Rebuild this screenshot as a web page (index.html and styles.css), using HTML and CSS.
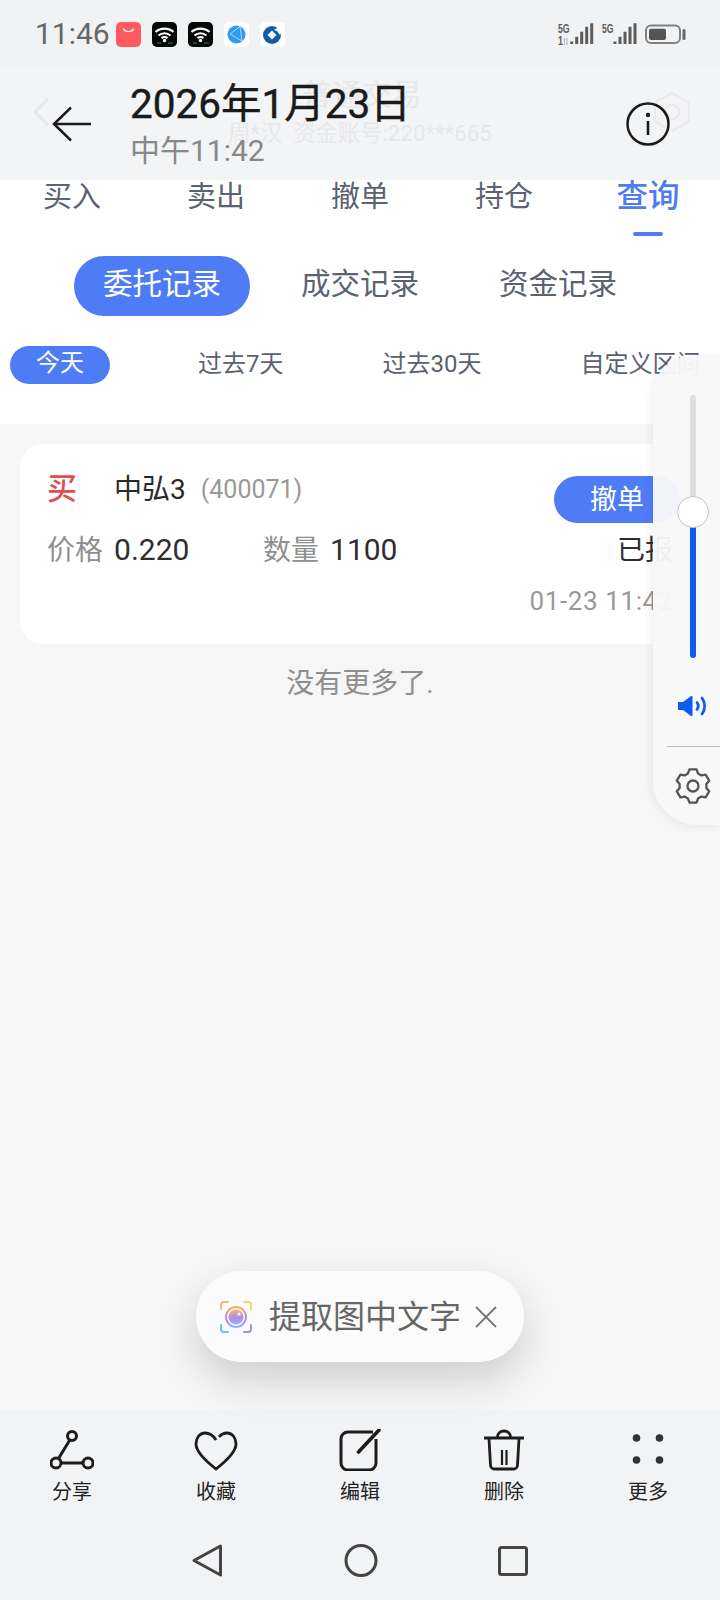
FILE: index.html
```html
<!DOCTYPE html>
<html lang="zh-CN">
<head>
<meta charset="utf-8">
<title>委托记录</title>
<link rel="stylesheet" href="styles.css">
</head>
<body>
<div class="app">
  <div class="status">
    <span class="time">11:46</span>
    <div class="status-apps">
      <svg class="app-icon" viewBox="0 0 25 25"><rect width="25" height="25" rx="5" fill="#ff5a60"/><path d="M7.500 6.500c1 4 9 4 10 0" fill="none" stroke="#fff" stroke-width="1.200"/></svg>
      <svg class="app-icon" viewBox="0 0 25 25"><rect width="25" height="25" rx="5" fill="#050707"/><path d="M3.500 10c5-4.500 13-4.500 18 0M6.500 13.500c3.500-3 8.500-3 12 0M9.500 16c1.800-1.200 4.200-1.200 6 0" fill="none" stroke="#fff" stroke-width="2.200"/><circle cx="12.500" cy="18.500" r="1.700" fill="#fff"/><path d="M5 21h4M16 21h5" stroke="#1f7f83" stroke-width="1.200"/></svg>
      <svg class="app-icon" viewBox="0 0 25 25"><rect width="25" height="25" rx="5" fill="#050707"/><path d="M3.500 10c5-4.500 13-4.500 18 0M6.500 13.500c3.500-3 8.500-3 12 0M9.500 16c1.800-1.200 4.200-1.200 6 0" fill="none" stroke="#fff" stroke-width="2.200"/><circle cx="12.500" cy="18.500" r="1.700" fill="#fff"/><path d="M5 21h4M16 21h5" stroke="#1f7f83" stroke-width="1.200"/></svg>
      <svg class="app-icon" viewBox="0 0 25 25"><rect width="25" height="25" rx="5" fill="#fff"/><circle cx="12.500" cy="12.500" r="9" fill="#2c9cf2"/><path d="M16 4.500 6 12l12 7M16 4.500 18 19" fill="none" stroke="#cfeaff" stroke-width=".8"/></svg>
      <svg class="app-icon" viewBox="0 0 25 25"><rect width="25" height="25" rx="5" fill="#fff"/><circle cx="12" cy="13" r="9" fill="#0f5da8"/><path d="M12 8.500l4.500 4.500-4.500 4.500-4.500-4.500z" fill="#fff"/><path d="M14 8 20 4l3 4-3 5-3-4z" fill="#fff"/></svg>
    </div>
    <svg class="signal" viewBox="0 0 132 28">
      <text class="sig-label" x="2" y="13" textLength="11.500" lengthAdjust="spacingAndGlyphs">5G</text>
      <text class="sig-label" x="2" y="25" textLength="5" lengthAdjust="spacingAndGlyphs">1</text>
      <path d="M8.500 18v7M11 25v-7" stroke="#bbb" stroke-width="1.200"/>
      <path class="bars" d="M15.700 21.500V24M20.700 16.700V24M25.700 11.700V24M30.700 6.700V24M35.700 3.300V24"/>
      <text class="sig-label" x="46" y="13" textLength="11.500" lengthAdjust="spacingAndGlyphs">5G</text>
      <path class="bars" d="M59 21.500V24M64 16.700V24M69 11.700V24M74 6.700V24M79 3.300V24"/>
      <rect x="90" y="5.500" width="34" height="17.500" rx="5" fill="none" stroke="#808080" stroke-width="2"/>
      <rect x="93" y="8.700" width="17" height="11.300" rx="2" fill="#555"/>
      <rect x="126.500" y="9" width="3" height="11" rx="1.500" fill="#666"/>
    </svg>
  </div>

  <header class="header">
    <div class="ghost">
      <svg class="ghost-back" viewBox="0 0 18 32"><path d="M16 2 2 16l14 14" fill="none" stroke="#e7e8ea" stroke-width="3"/></svg>
      <div class="ghost-title">普通交易</div>
      <div class="ghost-sub">周*汉&nbsp;&nbsp;资金账号:220***665</div>
      <svg class="ghost-hex" viewBox="0 0 38 40"><path d="M19 1 36 10.500v19L19 39 2 29.500v-19z" fill="none" stroke="#e9eaec" stroke-width="2"/><circle cx="19" cy="20" r="7" fill="none" stroke="#efe6e8" stroke-width="2"/></svg>
    </div>
    <svg class="back-arrow" viewBox="0 0 40 36"><path d="M19 1.500 2 18l17 16.500M2 18h37" fill="none" stroke="#1c1c1c" stroke-width="2.500"/></svg>
    <div class="heading">
      <div class="title">2026年1月23日</div>
      <div class="subtitle">中午11:42</div>
    </div>
    <svg class="info" viewBox="0 0 44 44"><circle cx="22" cy="22" r="20.500" fill="none" stroke="#1c1c1c" stroke-width="2.500"/><circle cx="22" cy="13" r="2.200" fill="#1c1c1c"/><path d="M22 19v14" stroke="#1c1c1c" stroke-width="2.600"/></svg>
  </header>

  <main class="main">
    <section class="top">
      <nav class="tabs">
        <div class="tab">买入</div>
        <div class="tab">卖出</div>
        <div class="tab">撤单</div>
        <div class="tab">持仓</div>
        <div class="tab tab-active">查询<span class="tab-bar"></span></div>
      </nav>
      <div class="records">
        <div class="record record-active">委托记录</div>
        <div class="record">成交记录</div>
        <div class="record">资金记录</div>
      </div>
      <div class="ranges">
        <div class="range range-active">今天</div>
        <div class="range range-7">过去7天</div>
        <div class="range range-30">过去30天</div>
        <div class="range range-custom">自定义区间</div>
      </div>
    </section>

    <article class="card">
      <div class="card-head">
        <span class="side">买</span>
        <span class="name">中弘3</span>
        <span class="code">(400071)</span>
        <button class="cancel">撤单</button>
      </div>
      <div class="card-row">
        <span class="label">价格</span><span class="value value-price">0.220</span>
        <span class="label">数量</span><span class="value">1100</span>
        <span class="state">已报</span>
      </div>
      <div class="stamp">01-23 11:42</div>
    </article>
    <p class="no-more">没有更多了.</p>
  </main>

  <footer class="footer">
    <div class="tools">
      <div class="tool">
        <svg class="tool-icon" viewBox="0 0 44 42"><g fill="none" stroke="#1c1c1c" stroke-width="3"><circle cx="22" cy="7" r="4.500"/><circle cx="6" cy="34" r="5"/><circle cx="38" cy="34" r="5"/><path d="M19.500 11.500 8.500 29.500M11 34h22"/></g></svg>
        <span class="tool-label">分享</span>
      </div>
      <div class="tool">
        <svg class="tool-icon" viewBox="0 0 44 42"><path d="M22 11C19 6 15 4 11 4 5.500 4 2 9 2 15c0 8 11 18 20 25 9-7 20-17 20-25 0-6-3.500-11-9-11-3 0-6 1.500-8 4" fill="none" stroke="#1c1c1c" stroke-width="2.800"/></svg>
        <span class="tool-label">收藏</span>
      </div>
      <div class="tool">
        <svg class="tool-icon" viewBox="0 0 44 42"><path d="M35 3H10a7 7 0 0 0-7 7v24a7 7 0 0 0 7 7h21a7 7 0 0 0 7-7V10" fill="none" stroke="#1c1c1c" stroke-width="3"/><path d="M20.500 23 41 1" stroke="#1c1c1c" stroke-width="3.600" stroke-linecap="round"/></svg>
        <span class="tool-label">编辑</span>
      </div>
      <div class="tool">
        <svg class="tool-icon" viewBox="0 0 44 42"><g fill="none" stroke="#1c1c1c" stroke-width="2.800"><path d="M2 9h40"/><path d="M15.500 8c0-8 13-8 13 0"/><path d="M7 10l1.500 26a4 4 0 0 0 4 4h19a4 4 0 0 0 4-4L37 10"/><path d="M20 21v15M24.500 21v15" stroke-width="2.200"/></g></svg>
        <span class="tool-label">删除</span>
      </div>
      <div class="tool">
        <svg class="tool-icon" viewBox="0 0 44 42"><g fill="#333"><circle cx="10.500" cy="9" r="3.800"/><circle cx="33.500" cy="9" r="3.800"/><circle cx="10.500" cy="31" r="3.800"/><circle cx="33.500" cy="31" r="3.800"/></g></svg>
        <span class="tool-label">更多</span>
      </div>
    </div>
    <div class="nav">
      <svg class="nav-back" viewBox="0 0 30 33"><path d="M28.500 2 2 16.500 28.500 31z" fill="none" stroke="#444" stroke-width="3" stroke-linejoin="round"/></svg>
      <svg class="nav-home" viewBox="0 0 34 33"><circle cx="17" cy="16.500" r="15" fill="none" stroke="#444" stroke-width="3"/></svg>
      <svg class="nav-recent" viewBox="0 0 30 30"><rect x="1.500" y="1.500" width="27" height="27" rx="2" fill="none" stroke="#444" stroke-width="3"/></svg>
    </div>
  </footer>

  <aside class="volume">
    <div class="track">
      <span class="track-off"></span>
      <span class="track-on"></span>
      <span class="thumb"></span>
    </div>
    <svg class="speaker" viewBox="0 0 32 22"><path d="M1 7h5l8-6a1 1 0 0 1 1.500 1v18a1 1 0 0 1-1.500 1l-8-6H1z" fill="#0f5af0"/><path d="M20 7.500c1.500 2 1.500 5 0 7M25 3c3.500 4.500 3.500 11.500 0 16" fill="none" stroke="#0f5af0" stroke-width="2.800" stroke-linecap="round"/></svg>
    <div class="vol-divider"></div>
    <svg class="gear" viewBox="0 0 36 36"><g transform="translate(18 18)" fill="none" stroke="#555" stroke-width="2.300" stroke-linejoin="round"><polygon points="-3.500,-16.600 3.500,-16.600 5.100,-12.500 8.300,-10.600 12.600,-11.400 16.200,-5.300 13.400,-1.900 13.400,1.900 16.200,5.300 12.600,11.400 8.300,10.600 5.100,12.500 3.500,16.600 -3.500,16.600 -5.100,12.500 -8.300,10.600 -12.600,11.400 -16.200,5.300 -13.400,1.900 -13.400,-1.900 -16.200,-5.300 -12.600,-11.400 -8.300,-10.600 -5.100,-12.500"/><circle r="5.500"/></g></svg>
  </aside>

  <div class="ocr">
    <svg class="ocr-icon" viewBox="0 0 32 32">
      <defs>
        <linearGradient id="eye" x1="0" y1="0" x2="0" y2="1"><stop offset="0" stop-color="#f7b46a"/><stop offset=".55" stop-color="#b58ae8"/><stop offset="1" stop-color="#8fb6f5"/></linearGradient>
      </defs>
      <g fill="none" stroke-width="2" stroke-linecap="round">
        <path d="M1 8V4a3 3 0 0 1 3-3h4" stroke="#f8b878"/>
        <path d="M24 1h4a3 3 0 0 1 3 3v4" stroke="#f9d268"/>
        <path d="M1 24v4a3 3 0 0 0 3 3h4" stroke="#78bdf5"/>
        <path d="M24 31h4a3 3 0 0 0 3-3v-4" stroke="#a48af0"/>
        <circle cx="16" cy="16" r="10" stroke="url(#eye)"/>
      </g>
      <circle cx="16" cy="16" r="7.500" fill="url(#eye)"/>
      <circle cx="19" cy="13" r="1.500" fill="#fff"/>
    </svg>
    <span class="ocr-text">提取图中文字</span>
    <svg class="ocr-close" viewBox="0 0 22 22"><path d="M1 1l20 20M21 1 1 21" stroke="#777" stroke-width="1.800"/></svg>
  </div>
</div>
</body>
</html>
```
FILE: styles.css
```css
* { box-sizing: border-box; }
html, body { margin: 0; padding: 0; }
body { font-family: Roboto, "Noto Sans CJK SC", sans-serif; background: #f6f6f6; }

.app {
  position: relative;
  width: 720px;
  height: 1600px;
  overflow: hidden;
  display: flex;
  flex-direction: column;
  background: #f6f6f6;
}

/* status bar */
.status {
  height: 68px;
  flex: none;
  display: flex;
  align-items: center;
  padding: 0 32px 0 35px;
  background: #f1f2f4;
}
.time { width: 73px; font-size: 30px; line-height: 36px; color: #666; }
.status-apps { display: flex; gap: 11px; margin-left: 8px; }
.app-icon { width: 25px; height: 25px; display: block; }
.signal { width: 132px; height: 28px; margin-left: auto; display: block; }
.sig-label { font: 700 12px "Liberation Sans", sans-serif; fill: #5c5c5c; }
.bars { stroke: #5c5c5c; stroke-width: 3; fill: none; }

/* header */
.header {
  position: relative;
  height: 112px;
  flex: none;
  display: flex;
  align-items: center;
  padding-left: 52px;
  background: #f3f4f6;
}
.ghost { position: absolute; inset: 0; }
.ghost-back { position: absolute; left: 33px; top: 29px; width: 17px; height: 30px; }
.ghost-title {
  position: absolute; left: 302px; top: 8px;
  font-size: 30px; line-height: 38px; color: #e7e8ea; white-space: nowrap;
}
.ghost-sub {
  position: absolute; left: 228px; top: 50px;
  font-size: 22.300px; line-height: 30px; color: #e7e8ea; white-space: nowrap;
}
.ghost-hex { position: absolute; left: 653px; top: 24px; width: 38px; height: 40px; }
.back-arrow { position: relative; width: 40px; height: 36px; flex: none; }
.heading { position: relative; margin-left: 38px; padding-top: 1px; }
.title { font-size: 40.500px; line-height: 46px; font-weight: 400; -webkit-text-stroke: 0.4px #1a1a1a; color: #1a1a1a; white-space: nowrap; }
.subtitle { margin-top: 6px; font-size: 30px; line-height: 36px; color: #888; white-space: nowrap; }
.info { position: relative; width: 44px; height: 44px; margin-left: auto; margin-right: 50px; flex: none; }

/* main */
.main { flex: 1; min-height: 0; }
.top { background: #fff; padding-bottom: 40px; }
.tabs { display: grid; grid-template-columns: repeat(5, 144px); height: 56px; }
.tab {
  display: flex;
  flex-direction: column;
  align-items: center;
  font-size: 29px;
  line-height: 34px;
  color: #5b6270;
}
.tab-active { color: #4e7cf0; font-size: 31.500px; font-weight: 500; }
.tab-bar { width: 30px; height: 4px; margin-top: 18px; border-radius: 2px; background: #4e7cf0; }

.records {
  display: grid;
  grid-template-columns: repeat(3, 198px);
  justify-content: center;
  justify-items: center;
  margin-top: 20px;
}
.record {
  width: 176px;
  height: 60px;
  border-radius: 30px;
  font-size: 29.500px;
  line-height: 56px;
  text-align: center;
  color: #5b6270;
}
.record-active { background: #4e7cf6; color: #fff; }

.ranges { display: flex; margin-top: 30px; padding-left: 10px; height: 38px; }
.range { font-size: 24px; line-height: 36px; color: #5b6270; white-space: nowrap; }
.range-active { width: 100px; border-radius: 19px; background: #4e7cf6; color: #fff; text-align: center; line-height: 34px; }
.range-7 { margin-left: 88px; }
.range-30 { margin-left: 99px; }
.range-custom { margin-left: 99px; }

/* order card */
.card {
  width: 680px;
  margin: 20px 0 0 20px;
  padding: 32px 27px 28px 27px;
  border-radius: 22px;
  background: #fff;
}
.card-head { display: flex; align-items: flex-start; height: 47px; }
.side { width: 67px; font-size: 30px; line-height: 26px; font-weight: 500; color: #e04f4f; }
.name { font-size: 28px; line-height: 28px; color: #2a2a2a; }
.code { margin-left: 15px; font-size: 25px; line-height: 28px; color: #999; }
.cancel {
  width: 126px;
  height: 47px;
  margin: 0 -7px 0 auto;
  padding: 0;
  border: 0;
  border-radius: 24px;
  background: #4e7cf6;
  font: 27px/44px Roboto, "Noto Sans CJK SC", sans-serif;
  color: #fff;
}
.card-row { display: flex; align-items: baseline; margin-top: 10px; font-size: 28px; line-height: 34px; }
.label { color: #8f8f8f; }
.value { margin-left: 11px; font-size: 30px; color: #2e2e2e; }
.value-price { width: 72px; margin-right: 77px; }
.state { margin-left: auto; color: #2e2e2e; }
.stamp { margin-top: 18px; font-size: 26px; line-height: 30px; letter-spacing: 0.6px; text-align: right; color: #999; }
.no-more { margin: 22px 0 0; font-size: 28px; line-height: 36px; text-align: center; color: #8e8e8e; }

/* footer */
.footer { height: 190px; flex: none; padding-top: 19px; background: #f2f3f5; }
.tools { display: grid; grid-template-columns: repeat(5, 144px); }
.tool { display: flex; flex-direction: column; align-items: center; }
.tool-icon { width: 44px; height: 42px; display: block; }
.tool-label { margin-top: 8px; font-size: 20px; line-height: 26px; color: #222; }
.nav { display: flex; align-items: center; justify-content: center; margin-top: 39px; padding-right: 1px; }
.nav-back { width: 30px; height: 33px; }
.nav-home { width: 34px; height: 33px; margin-left: 122px; }
.nav-recent { width: 30px; height: 30px; margin-left: 120px; }

/* floating volume panel */
.volume {
  position: absolute;
  left: 653px;
  right: 0;
  top: 355px;
  height: 470px;
  padding-top: 40px;
  border-radius: 40px 0 0 44px;
  background: rgba(248, 248, 249, 0.96);
  box-shadow: -2px 2px 8px rgba(0, 0, 0, 0.06);
}
.track {
  position: relative;
  display: flex;
  flex-direction: column;
  width: 6px;
  height: 263px;
  margin-left: 37px;
}
.track-off { height: 130px; border-radius: 3px 3px 0 0; background: #dedede; }
.track-on { flex: 1; border-radius: 0 0 3px 3px; background: #0f5af0; }
.thumb {
  position: absolute;
  left: -13px;
  top: 101px;
  width: 32px;
  height: 32px;
  border: 1px solid #c4c4c4;
  border-radius: 50%;
  background: #fff;
}
.speaker { display: block; width: 32px; height: 22px; margin: 37px 0 0 24px; }
.vol-divider { height: 1px; margin: 29px 0 0 14px; background: #bdbdbd; }
.gear { display: block; width: 36px; height: 36px; margin: 21px 0 0 22px; }

/* text extraction pill */
.ocr {
  position: absolute;
  left: 196px;
  top: 1271px;
  width: 328px;
  height: 91px;
  display: flex;
  align-items: center;
  padding-left: 24px;
  border-radius: 46px;
  background: #fbfbfb;
  box-shadow: 0 18px 40px rgba(0, 0, 0, 0.16);
}
.ocr-icon { width: 32px; height: 32px; flex: none; }
.ocr-text { margin-left: 17px; font-size: 32px; line-height: 40px; color: #666; white-space: nowrap; }
.ocr-close { width: 22px; height: 22px; margin-left: 14px; flex: none; }
```
